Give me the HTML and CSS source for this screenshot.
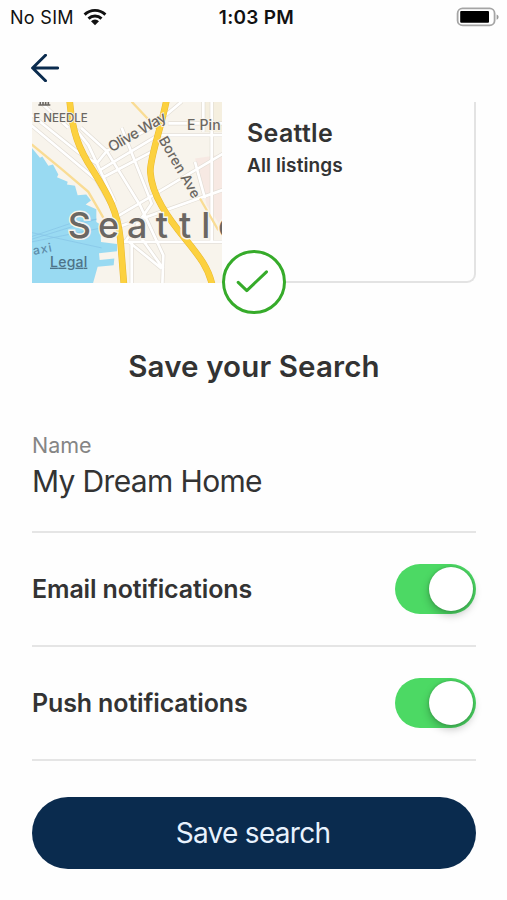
FILE: index.html
```html
<!DOCTYPE html>
<html lang="en">
<head>
    <meta charset="UTF-8">
    <title>Save your Search</title>
    <meta name="viewport" content="width=device-width, initial-scale=1.0">
    <link rel="stylesheet" href="styles.css">
</head>
<body>
    <div class="status-bar">
        <div class="carrier">
            <span class="carrier-name">No SIM</span>
            <svg class="wifi" width="24" height="18" viewBox="0 0 24 18">
                <g fill="none" stroke="#111" stroke-width="2.9">
                    <path d="M1.6 6.6a15 15 0 0 1 20.8 0"/>
                    <path d="M5.5 10.6a9.4 9.4 0 0 1 13 0"/>
                </g>
                <path d="M12 17.2l-4-4a5.7 5.7 0 0 1 8 0z" fill="#111"/>
            </svg>
        </div>
        <div class="time">1:03 PM</div>
        <div class="battery">
            <svg width="43" height="20" viewBox="0 0 43 20">
                <rect x="1.6" y="1.4" width="37" height="17" rx="5" fill="#fff" stroke="#a5a5a5" stroke-width="1.8"/>
                <rect x="4.2" y="4" width="28.8" height="11.8" rx="1" fill="#000"/>
                <path d="M40.6 7.4c2.6.8 2.6 4.6 0 5.4z" fill="#999"/>
            </svg>
        </div>
    </div>

    <div class="nav">
        <svg class="back" width="28" height="28" viewBox="0 0 28 28">
            <path d="M14.5 1.3L1.6 14l12.9 12.7M1.8 14H26.6" fill="none" stroke="#0a2b4e" stroke-width="3" stroke-linecap="round" stroke-linejoin="round"/>
        </svg>
    </div>

    <div class="card">
        <svg class="map" viewBox="21 21 570 542" preserveAspectRatio="none">
            <rect x="0" y="0" width="620" height="600" fill="#f8f4ec"/>
            <path d="M510 190L592 178V400L545 330z" fill="#f7e9e3"/>
            <path d="M540 21h52v90h-60z" fill="#f5efdf"/>
            <!-- water -->
            <path d="M0 150L22 160 45 188 52 184 70 212 84 208 100 238 96 246 128 260 126 268 150 272 158 300 184 298 198 316 182 328 214 342 214 380 226 388 228 440 276 446 276 468 222 474 224 494 268 490 266 510 218 514 204 564H0z" fill="#99daf2"/>
            <g fill="none" stroke="#85c3e6" stroke-width="2">
                <path d="M20 432L214 372M20 424L150 380 214 372M20 440L230 398M20 412L230 458"/>
            </g>
            <!-- streets, casing then fill -->
            <g fill="none" stroke="#e2ddd5" stroke-width="12">
                <path d="M20 92L215 255 285 378M20 60L160 172 215 205M45 20L130 98M150 100L190 150 270 320M168 98L245 168 345 330 415 480 412 570M290 98L380 325 300 440"/>
                <path d="M215 205L245 168 375 100 470 20M225 225L400 120H600M238 245L390 165M270 368L600 172M280 395L600 282M290 440H600M312 440L410 520M320 440V570M350 430L415 520"/>
                <path d="M560 20V440M535 20V110M430 85H600M510 200L540 310"/>
            </g>
            <g fill="none" stroke="#fff" stroke-width="8">
                <path d="M20 92L215 255 285 378M20 60L160 172 215 205M45 20L130 98M150 100L190 150 270 320M168 98L245 168 345 330 415 480 412 570M290 98L380 325 300 440"/>
                <path d="M215 205L245 168 375 100 470 20M225 225L400 120H600M238 245L390 165M270 368L600 172M280 395L600 282M290 440H600M312 440L410 520M320 440V570M350 430L415 520"/>
                <path d="M560 20V440M535 20V110M430 85H600M510 200L540 310"/>
            </g>
            <path d="M20 148L110 222 190 290 222 345 245 385M320 20L400 105M525 310L580 405" fill="none" stroke="#f9dc94" stroke-width="7"/>
            <!-- highways -->
            <g fill="none" stroke="#e9b930" stroke-width="20">
                <path d="M134 18C142 110 160 160 205 228C250 300 278 350 286 430L297 570"/>
                <path d="M424 18C408 100 374 190 376 230C380 300 430 370 480 430C520 480 550 515 562 570"/>
            </g>
            <g fill="none" stroke="#fcd13f" stroke-width="17">
                <path d="M134 18C142 110 160 160 205 228C250 300 278 350 286 430L297 570"/>
                <path d="M424 18C408 100 374 190 376 230C380 300 430 370 480 430C520 480 550 515 562 570"/>
            </g>
            <path d="M40 30H76M46 28V20M54 28V16M62 28V16M70 28V20" fill="none" stroke="#6b6762" stroke-width="5"/>
            <g class="map-labels">
                <text x="25" y="80" font-size="35" textLength="163" lengthAdjust="spacingAndGlyphs">E NEEDLE</text>
                <text x="486" y="104" font-size="42" textLength="101">E Pin</text>
                <text transform="translate(260 172) rotate(-30)" font-size="44" textLength="194">Olive Way</text>
                <text transform="translate(400 134) rotate(60)" font-size="42" textLength="206">Boren Ave</text>
                <text transform="translate(26 479) rotate(-11)" font-size="36" textLength="57" class="water-label">axi</text>
                <text x="75" y="514" font-size="42" textLength="112" class="legal">Legal</text>
                <text x="128 219 306 392 462 529 579" y="427" class="city">Seattle</text>
            </g>
        </svg>
        <div class="card-info">
            <div class="card-title">Seattle</div>
            <div class="card-sub">All listings</div>
        </div>
        <svg class="check" width="66" height="66" viewBox="0 0 66 66">
            <circle cx="33" cy="33" r="30.5" fill="#fff" stroke="#36ab2a" stroke-width="3"/>
            <path d="M17.2 33.4L25.8 41.6 45.5 22.8" fill="none" stroke="#36ab2a" stroke-width="3" stroke-linecap="round" stroke-linejoin="round"/>
        </svg>
    </div>

    <h1>Save your Search</h1>

    <div class="form">
        <div class="name-field">
            <div class="label">Name</div>
            <div class="value">My Dream Home</div>
        </div>
        <div class="row">
            <span class="row-label">Email notifications</span>
            <div class="toggle"><div class="knob"></div></div>
        </div>
        <div class="row">
            <span class="row-label">Push notifications</span>
            <div class="toggle"><div class="knob"></div></div>
        </div>
    </div>

    <button class="save-btn">Save search</button>
</body>
</html>
```
FILE: styles.css
```css
* {
    box-sizing: border-box;
}
body {
    margin: 0;
    height: 900px;
    padding: 0 31px 0 32px;
    background: #fefefe;
    color: #333;
    font-family: Inter, "Liberation Sans", sans-serif;
    overflow: hidden;
}
/* STATUS BAR */
.status-bar {
    display: grid;
    grid-template-columns: 1fr auto 1fr;
    align-items: center;
    height: 34px;
    margin: 0 -23px 0 -22px;
    color: #111;
    font-size: 18px;
}
.carrier {
    display: flex;
    align-items: center;
    gap: 9px;
    letter-spacing: 0.3px;
}
.time {
    font-size: 19px;
    font-weight: 600;
    letter-spacing: 0.3px;
    padding-left: 4px;
}
.battery {
    display: flex;
    justify-content: flex-end;
}
.nav {
    height: 68px;
    padding-top: 20px;
}
.back {
    display: block;
    margin-left: -1px;
}
/* CARD */
.card {
    position: relative;
    display: flex;
    height: 181px;
    border-right: 2px solid #e3e3e3;
    border-bottom: 2px solid #e3e3e3;
    border-radius: 0 0 9px 0;
}
.map {
    width: 190px;
    height: 181px;
    flex: none;
    margin-bottom: -2px;
}
.map-labels {
    fill: #6b6762;
    font-weight: 500;
    stroke: #f8f4ec;
    stroke-width: 5px;
    paint-order: stroke;
}
.map-labels .water-label {
    fill: #5d8ba8;
    stroke: none;
}
.map-labels .legal {
    fill: #4e7388;
    stroke: none;
    text-decoration: underline;
}
.map-labels .city {
    font-size: 108px;
    font-weight: 500;
    stroke-width: 9px;
}
.card-info {
    padding: 16px 0 0 25px;
}
.card-title {
    font-size: 25px;
    font-weight: 600;
    letter-spacing: 0.3px;
    line-height: 30px;
}
.card-sub {
    margin-top: 5px;
    font-size: 19px;
    font-weight: 600;
    letter-spacing: 0.1px;
    line-height: 26px;
}
.check {
    position: absolute;
    left: 189px;
    top: 147px;
}
h1 {
    margin: 65px 0 0;
    font-size: 29.5px;
    font-weight: 600;
    letter-spacing: 0.13px;
    line-height: 36px;
    text-align: center;
}
/* FORM */
.name-field {
    height: 149px;
    padding-top: 48px;
    border-bottom: 2px solid #e5e5e5;
}
.label {
    color: #858585;
    font-size: 21.5px;
    line-height: 26px;
}
.value {
    margin-top: 5px;
    font-size: 30px;
    letter-spacing: -0.65px;
    line-height: 36px;
}
.row {
    display: flex;
    align-items: center;
    justify-content: space-between;
    height: 114px;
    border-bottom: 2px solid #e5e5e5;
}
.row-label {
    font-size: 25px;
    font-weight: 600;
    letter-spacing: -0.13px;
}
.toggle {
    display: flex;
    justify-content: flex-end;
    width: 81px;
    height: 50px;
    padding: 3px;
    border-radius: 25px;
    background: #4cd964;
}
.knob {
    width: 44px;
    height: 44px;
    border-radius: 50%;
    background: #fff;
    box-shadow: 0 4px 9px rgba(0, 0, 0, 0.25), 0 0 3px rgba(0, 0, 0, 0.2);
}
.save-btn {
    display: block;
    width: 100%;
    height: 72px;
    margin-top: 36px;
    padding: 0 8px 0 6px;
    border: 0;
    border-radius: 36px;
    background: #0a2b4e;
    color: #e8f2fd;
    font-family: inherit;
    font-size: 28px;
    letter-spacing: -0.7px;
}
```
